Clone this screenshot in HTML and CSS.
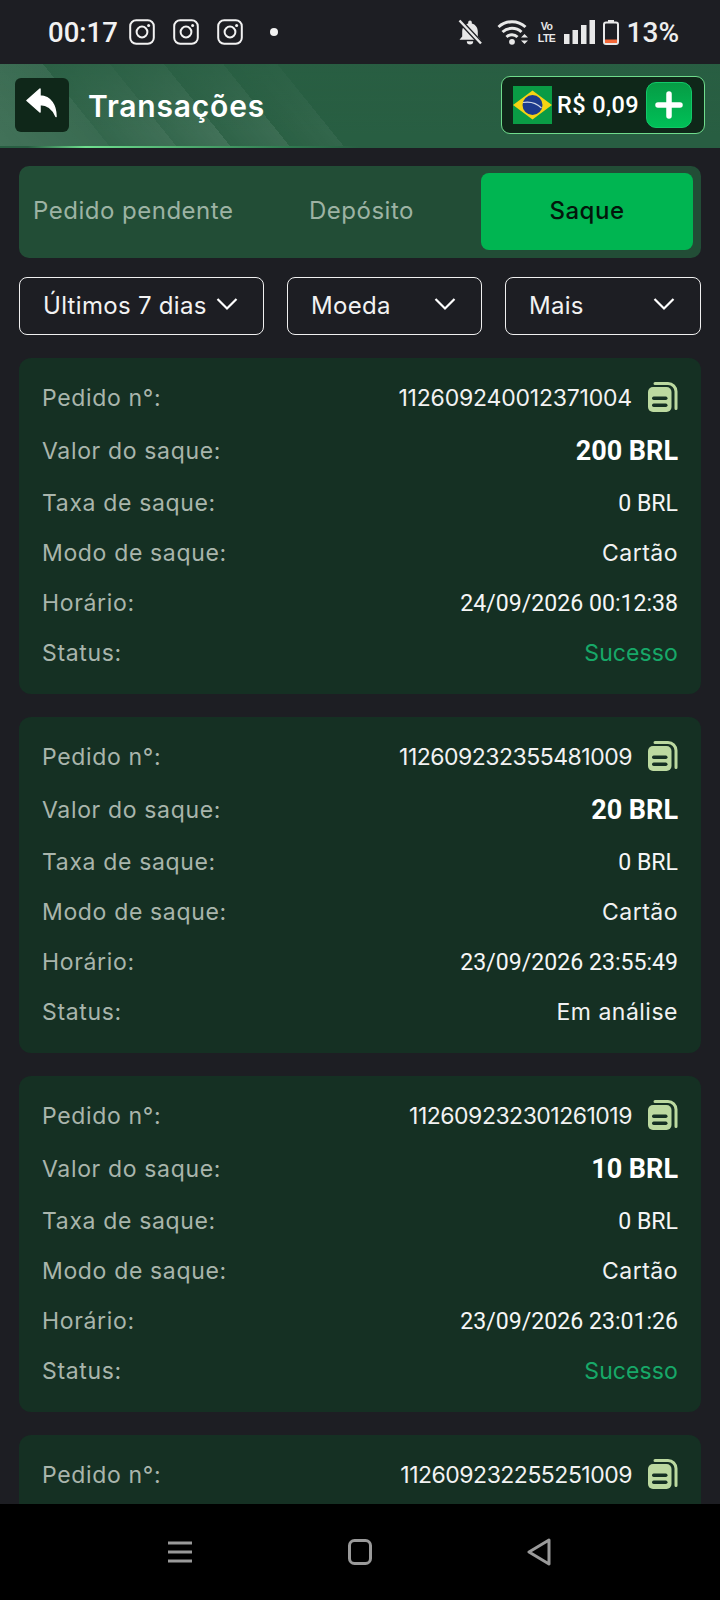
FILE: index.html
```html
<!DOCTYPE html>
<html lang="pt-BR">
<head>
    <meta charset="UTF-8">
    <meta name="viewport" content="width=device-width, initial-scale=1.0">
    <title>Transações</title>
    <link rel="stylesheet" href="styles.css">
</head>
<body>
    <svg class="defs" width="0" height="0">
        <symbol id="insta" viewBox="0 0 26 26">
            <rect x="1.2" y="1.2" width="23.6" height="23.6" rx="6" fill="none" stroke="currentColor" stroke-width="2"/>
            <circle cx="13" cy="13" r="5.4" fill="none" stroke="currentColor" stroke-width="2"/>
            <circle cx="19.6" cy="6.4" r="1.5" fill="currentColor"/>
        </symbol>
        <symbol id="copy" viewBox="0 0 30 30">
            <path d="M7 1.500H20a8 8 0 0 1 8 8V26.500" fill="none" stroke="#bcd9a0" stroke-width="3" stroke-linecap="round"/>
            <rect x="0" y="5" width="23.500" height="25" rx="5" fill="#bcd9a0"/>
            <rect x="4" y="14.500" width="15.500" height="3.400" rx="1.700" fill="#153023"/>
            <rect x="4" y="21.500" width="15.500" height="3.400" rx="1.700" fill="#153023"/>
        </symbol>
        <symbol id="chev" viewBox="0 0 22 14">
            <path d="M1.500 2l9.500 9.500L20.500 2" fill="none" stroke="currentColor" stroke-width="2.200"/>
        </symbol>
    </svg>

    <div class="status-bar">
        <div class="status-left">
            <span class="clock">00:17</span>
            <svg class="insta"><use href="#insta"/></svg>
            <svg class="insta"><use href="#insta"/></svg>
            <svg class="insta"><use href="#insta"/></svg>
            <span class="dot"></span>
        </div>
        <div class="status-right">
            <svg class="st-bell" viewBox="0 0 24 26">
                <path d="M12 1.500a1.800 1.800 0 0 1 1.800 1.800v1.100C17.500 5.300 19.800 8.500 19.800 12.500v5l2.700 3.200H1.500l2.700-3.200v-5C4.200 8.500 6.500 5.300 10.200 4.400V3.300A1.800 1.800 0 0 1 12 1.500z" fill="#e8e8e8"/>
                <path d="M8.800 22.300h6.400a3.200 3.200 0 0 1-6.400 0z" fill="#e8e8e8"/>
                <path d="M1.500 1.500L23 24.500" stroke="#1d1e23" stroke-width="5"/>
                <path d="M1.500 1.500L23 24.500" stroke="#e8e8e8" stroke-width="2.400"/>
            </svg>
            <svg class="st-wifi" viewBox="0 0 32 26">
                <path d="M1.500 8a20 20 0 0 1 27 0M5.500 13a14 14 0 0 1 19 0M9.500 18a8 8 0 0 1 11 0" fill="none" stroke="#e8e8e8" stroke-width="3"/>
                <circle cx="15" cy="22.800" r="2.900" fill="#e8e8e8"/>
                <path d="M27.500 15l3.500 3.500h-7zM27.500 25l3.500-3.500h-7z" fill="#e8e8e8"/>
            </svg>
            <span class="st-volte">Vo<br>LTE</span>
            <svg class="st-signal" viewBox="0 0 31 24">
                <rect x="0" y="14" width="5.500" height="10" fill="#e8e8e8"/>
                <rect x="8.500" y="10" width="5.500" height="14" fill="#e8e8e8"/>
                <rect x="17" y="5" width="5.500" height="19" fill="#e8e8e8"/>
                <rect x="25.500" y="0" width="5.500" height="24" fill="#e8e8e8"/>
            </svg>
            <svg class="st-batt" viewBox="0 0 16 25">
                <rect x="5" y="0" width="6" height="3" fill="#e8e8e8"/>
                <rect x="1" y="2.500" width="14" height="21.500" rx="2" fill="none" stroke="#e8e8e8" stroke-width="2"/>
                <rect x="2" y="19.500" width="12" height="3.500" fill="#f4693a"/>
            </svg>
            <span class="pct">13%</span>
        </div>
    </div>

    <header class="top-bar">
        <div class="back-btn">
            <svg viewBox="0 0 32 30" width="32" height="30">
                <path d="M14 1L1 12.500 14 24v-7.500c7 0 12.500 3.500 16 12 0-11-5-20-16-20.500z" fill="#fff" stroke="#fff" stroke-linejoin="round" stroke-width="1.500"/>
            </svg>
        </div>
        <h1>Transações</h1>
        <div class="wallet">
            <svg class="flag" viewBox="0 0 39 38">
                <rect width="39" height="38" fill="#0a9b45"/>
                <path d="M19.500 4.500L39 19 19.500 33.500 0 19z" fill="#f5d313"/>
                <circle cx="19.500" cy="19" r="10" fill="#1c3a8c"/>
                <path d="M10 16.500c6-1 13.500.5 18.500 5.500" fill="none" stroke="#cdd5e5" stroke-width="1.200"/>
            </svg>
            <span class="balance">R$ 0,09</span>
            <div class="add-btn">
                <svg viewBox="0 0 28 28" width="28" height="28">
                    <path d="M14 3v22M3 14h22" stroke="#fff" stroke-width="5.500" stroke-linecap="round"/>
                </svg>
            </div>
        </div>
    </header>

    <main class="content">
        <div class="tabs">
            <div class="tab tab-pending">Pedido pendente</div>
            <div class="tab tab-deposit">Depósito</div>
            <div class="tab tab-active">Saque</div>
        </div>

        <div class="filters">
            <div class="filter filter-date"><span>Últimos 7 dias</span><svg class="chev"><use href="#chev"/></svg></div>
            <div class="filter filter-coin"><span>Moeda</span><svg class="chev"><use href="#chev"/></svg></div>
            <div class="filter filter-more"><span>Mais</span><svg class="chev"><use href="#chev"/></svg></div>
        </div>

        <section class="card">
            <div class="row"><span class="label">Pedido n°:</span><span class="value order-no">112609240012371004<svg class="copy"><use href="#copy"/></svg></span></div>
            <div class="row row-amount"><span class="label">Valor do saque:</span><span class="num amount">200 BRL</span></div>
            <div class="row"><span class="label">Taxa de saque:</span><span class="num">0 BRL</span></div>
            <div class="row"><span class="label">Modo de saque:</span><span class="value">Cartão</span></div>
            <div class="row"><span class="label">Horário:</span><span class="num">24/09/2026 00:12:38</span></div>
            <div class="row"><span class="label">Status:</span><span class="value ok">Sucesso</span></div>
        </section>

        <section class="card">
            <div class="row"><span class="label">Pedido n°:</span><span class="value order-no tight">112609232355481009<svg class="copy"><use href="#copy"/></svg></span></div>
            <div class="row row-amount"><span class="label">Valor do saque:</span><span class="num amount">20 BRL</span></div>
            <div class="row"><span class="label">Taxa de saque:</span><span class="num">0 BRL</span></div>
            <div class="row"><span class="label">Modo de saque:</span><span class="value">Cartão</span></div>
            <div class="row"><span class="label">Horário:</span><span class="num">23/09/2026 23:55:49</span></div>
            <div class="row"><span class="label">Status:</span><span class="value">Em análise</span></div>
        </section>

        <section class="card">
            <div class="row"><span class="label">Pedido n°:</span><span class="value order-no tight">112609232301261019<svg class="copy"><use href="#copy"/></svg></span></div>
            <div class="row row-amount"><span class="label">Valor do saque:</span><span class="num amount">10 BRL</span></div>
            <div class="row"><span class="label">Taxa de saque:</span><span class="num">0 BRL</span></div>
            <div class="row"><span class="label">Modo de saque:</span><span class="value">Cartão</span></div>
            <div class="row"><span class="label">Horário:</span><span class="num">23/09/2026 23:01:26</span></div>
            <div class="row"><span class="label">Status:</span><span class="value ok">Sucesso</span></div>
        </section>

        <section class="card">
            <div class="row"><span class="label">Pedido n°:</span><span class="value order-no tight">112609232255251009<svg class="copy"><use href="#copy"/></svg></span></div>
        </section>
    </main>

    <nav class="nav-bar">
        <svg viewBox="0 0 26 24" width="26" height="24">
            <path d="M1 3h24M1 12h24M1 21h24" stroke="#9a9a9a" stroke-width="3"/>
        </svg>
        <svg viewBox="0 0 24 26" width="24" height="26">
            <rect x="1.500" y="1.500" width="21" height="23" rx="5" fill="none" stroke="#9a9a9a" stroke-width="3"/>
        </svg>
        <svg viewBox="0 0 24 28" width="24" height="28">
            <path d="M22 2L2 14l20 12z" fill="none" stroke="#9a9a9a" stroke-width="3" stroke-linejoin="round"/>
        </svg>
    </nav>
</body>
</html>
```

FILE: styles.css
```css
:root {
    --bg: #1d1e23;
    --card: #153023;
    --label: #a9b5ac;
    --green: #00b551;
}

* {
    box-sizing: border-box;
}

html, body {
    margin: 0;
    height: 1600px;
    overflow: hidden;
}

body {
    background-color: var(--bg);
    color: #fff;
    font-family: "Inter", "Open Sans", sans-serif;
    display: flex;
    flex-direction: column;
}

.defs {
    position: absolute;
}

/* status bar */
.status-bar {
    flex: none;
    height: 64px;
    padding: 0 41px 0 48px;
    display: flex;
    align-items: center;
    justify-content: space-between;
}

.status-left,
.status-right {
    display: flex;
    align-items: center;
}

.clock {
    font-family: Roboto, sans-serif;
    font-weight: 500;
    font-size: 27.500px;
    width: 81px;
    color: #f2f2f2;
}

.insta {
    width: 26px;
    height: 26px;
    margin-right: 18px;
    color: #f2f2f2;
}

.dot {
    width: 8px;
    height: 8px;
    border-radius: 50%;
    background-color: #f2f2f2;
    margin-left: 9px;
}

.st-bell {
    width: 24px;
    height: 26px;
    margin-right: 15px;
}

.st-wifi {
    width: 32px;
    height: 26px;
    margin-right: 9px;
}

.st-volte {
    font-family: "Liberation Sans", sans-serif;
    font-weight: 700;
    font-size: 10.500px;
    letter-spacing: -.5px;
    line-height: 12px;
    text-align: center;
    width: 18px;
    margin-right: 8px;
    color: #e8e8e8;
}

.st-signal {
    width: 31px;
    height: 24px;
    margin-right: 8px;
}

.st-batt {
    width: 16px;
    height: 25px;
    margin-right: 8px;
}

.pct {
    font-family: Roboto, sans-serif;
    font-size: 28px;
    font-weight: 500;
    color: #eee;
}

/* header */
.top-bar {
    flex: none;
    height: 84px;
    padding: 0 15px;
    display: flex;
    align-items: center;
    background-color: #285e42;
    background-image:
        linear-gradient(51deg, rgba(255,255,255,.12), rgba(255,255,255,.08) 85px, transparent 85px),
        linear-gradient(180deg, rgba(40,94,66,.7), rgba(40,94,66,0) 85%),
        linear-gradient(51deg, transparent 85px, rgba(255,255,255,.05) 85px, rgba(255,255,255,.11) 137px, rgba(255,255,255,.06) 137px, rgba(255,255,255,.12) 179px, rgba(255,255,255,.03) 179px, rgba(255,255,255,.09) 225px, rgba(255,255,255,.01) 225px, rgba(255,255,255,.05) 267px, transparent 267px);
    border-bottom: 2px solid;
    border-image: linear-gradient(90deg, #285e42 4%, #6fe08f 12%, #2f7a50 40%, #285e42 50%) 1;
}

.back-btn {
    width: 54px;
    height: 54px;
    border-radius: 6px;
    background-color: #0f2719;
    display: flex;
    align-items: center;
    justify-content: center;
    padding-bottom: 4px;
}

h1 {
    margin: 2px 0 0 19px;
    font-size: 30px;
    font-weight: 600;
    letter-spacing: .8px;
    flex: 1;
}

.wallet {
    width: 204px;
    height: 58px;
    padding: 0 12px 0 11px;
    border: 1.500px solid #6fdc8c;
    border-radius: 9px;
    background-color: #0f2719;
    display: flex;
    align-items: center;
}

.flag {
    width: 39px;
    height: 38px;
    flex: none;
}

.balance {
    font-family: Roboto, sans-serif;
    font-size: 23.500px;
    font-weight: 500;
    letter-spacing: .4px;
    margin-left: 5px;
    white-space: nowrap;
}

.add-btn {
    width: 46px;
    height: 46px;
    margin-left: auto;
    border-radius: 10px;
    background-color: #00b551;
    background-image: linear-gradient(#069c45, #00c057);
    border: 1px solid #12c868;
    display: flex;
    align-items: center;
    justify-content: center;
}

/* page */
.content {
    flex: 1;
    min-height: 0;
    overflow: hidden;
    padding: 18px 19px 0;
}

.tabs {
    height: 92px;
    padding: 7px 8px 8px 7px;
    border-radius: 10px;
    background-color: #224d36;
    display: flex;
    align-items: stretch;
}

.tab {
    display: flex;
    align-items: center;
    padding-bottom: 2px;
    font-size: 24px;
    letter-spacing: .5px;
    color: #9db3a4;
    white-space: nowrap;
}

.tab-pending {
    width: 274px;
    padding-left: 7px;
}

.tab-deposit {
    width: 181px;
    padding-left: 9px;
}

.tab-active {
    flex: 1;
    justify-content: center;
    background-color: var(--green);
    border-radius: 8px;
    color: #03160b;
    font-weight: 500;
}

.filters {
    margin-top: 19px;
    display: flex;
    justify-content: space-between;
}

.filter {
    height: 58px;
    border: 1.500px solid #f0f0f0;
    border-radius: 8px;
    display: flex;
    align-items: center;
    justify-content: space-between;
    padding: 0 25px 2px 23px;
    font-size: 24px;
    letter-spacing: .3px;
    color: #f2f2f2;
    white-space: nowrap;
}

.filter-date {
    width: 245px;
}

.filter-coin {
    width: 195px;
}

.filter-more {
    width: 196px;
}

.chev {
    width: 22px;
    height: 14px;
    color: #fff;
    flex: none;
    margin-top: -2px;
}

.card {
    margin-top: 23px;
    padding: 15px 23px 16px;
    background-color: var(--card);
    border-radius: 12px;
}

.row {
    height: 50px;
    display: flex;
    align-items: center;
    justify-content: space-between;
    font-size: 23px;
}

.row-amount {
    height: 55px;
}

.label {
    color: var(--label);
    letter-spacing: .65px;
}

.value {
    display: flex;
    align-items: center;
    color: #f2f2f2;
    letter-spacing: .5px;
}

.order-no {
    letter-spacing: -.2px;
}

.order-no.tight {
    letter-spacing: -.5px;
}

.num {
    font-family: Roboto, sans-serif;
    font-weight: 400;
    font-size: 23.100px;
    color: #f6f6f6;
}

.amount {
    font-size: 27px;
    font-weight: 700;
    color: #fff;
}

.value.ok {
    color: #17a868;
    letter-spacing: .1px;
}

.copy {
    width: 30px;
    height: 30px;
    margin-left: 16px;
    margin-top: -2px;
}

/* android nav */
.nav-bar {
    flex: none;
    height: 96px;
    padding-right: 2px;
    background-color: #000;
    display: flex;
    align-items: center;
    justify-content: center;
    gap: 155px;
}
```
